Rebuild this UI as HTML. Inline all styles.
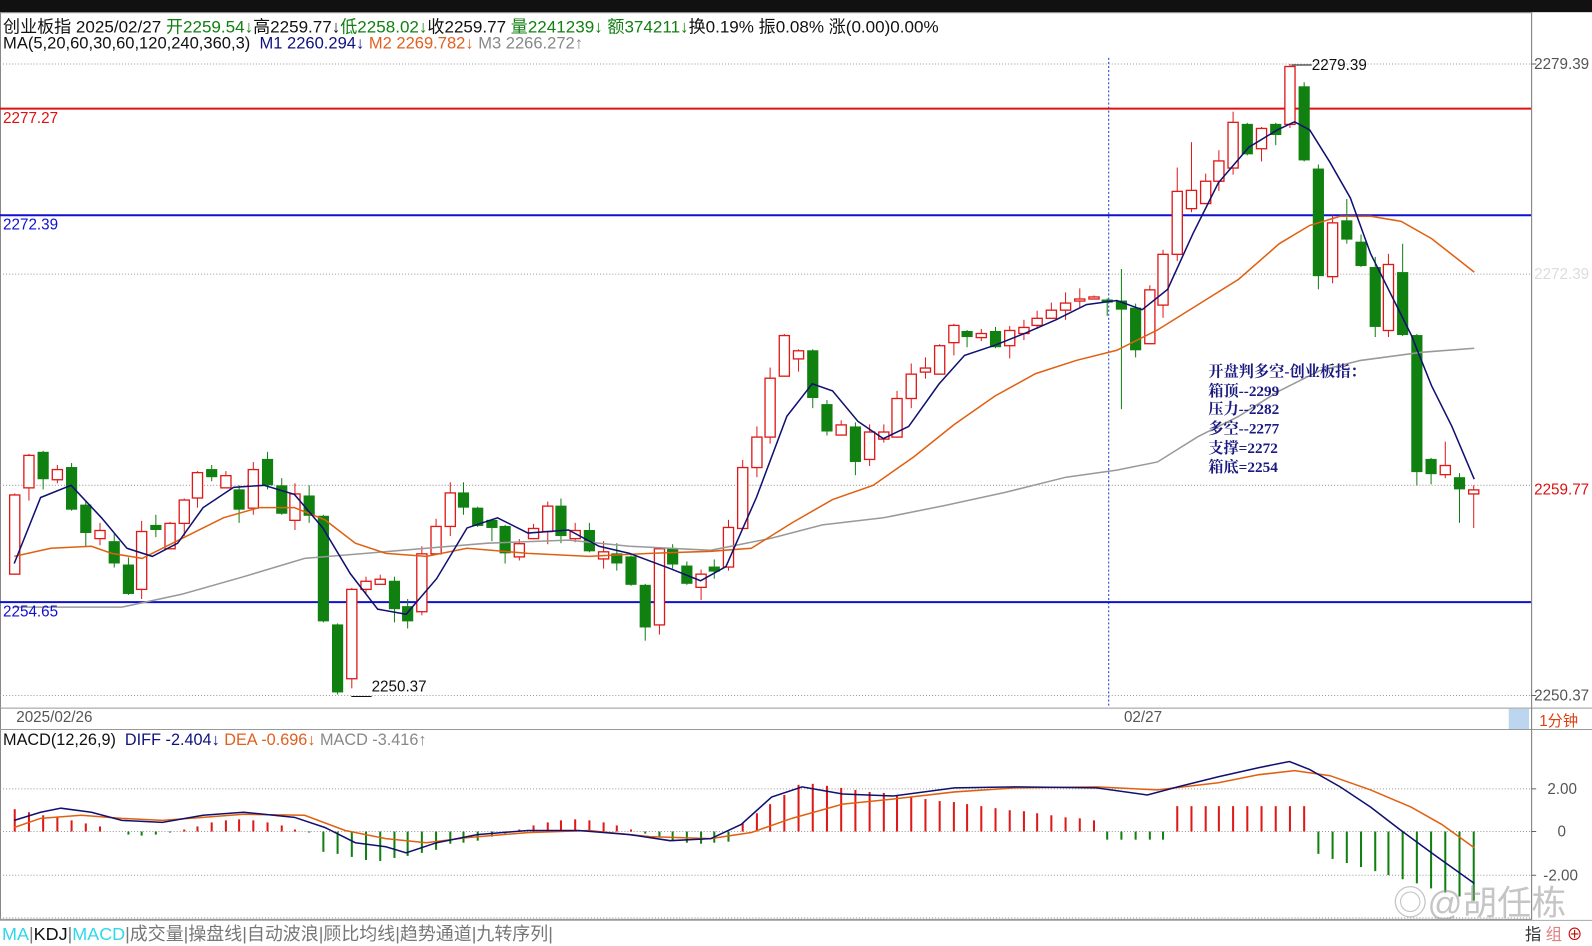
<!DOCTYPE html>
<html><head><meta charset="utf-8">
<style>
html,body{margin:0;padding:0;background:#fff;}
body{width:1592px;height:940px;overflow:hidden;position:relative;font-family:"Liberation Sans","Noto Sans CJK SC",sans-serif;}
#w{position:absolute;left:0;top:0;width:1568px;height:926px;transform:scale(1.01531);transform-origin:0 0;}
.t{position:absolute;white-space:nowrap;font-size:15px;}
</style></head><body><div id="w">
<div style="position:absolute;left:0;top:0;width:1568px;height:12px;background:#111;"></div>
<svg id="s" width="1568" height="926" style="position:absolute;left:0;top:0">
<rect x="0.5" y="12.5" width="1508" height="893" fill="none" stroke="#888"/>
<line x1="0" y1="697.5" x2="1568" y2="697.5" stroke="#999"/>
<line x1="0" y1="718.5" x2="1568" y2="718.5" stroke="#999"/>
<line x1="1508.5" y1="12" x2="1508.5" y2="906" stroke="#888"/>
<rect x="1486" y="698" width="20" height="20" fill="#bcd6f0"/>
<g stroke="#999" stroke-dasharray="1,2">
<line x1="0" y1="63" x2="1508" y2="63"/><line x1="0" y1="270" x2="1508" y2="270"/>
<line x1="0" y1="478" x2="1508" y2="478"/><line x1="0" y1="685" x2="1508" y2="685"/>
<line x1="0" y1="777" x2="1508" y2="777"/><line x1="0" y1="819" x2="1508" y2="819"/>
<line x1="0" y1="862" x2="1508" y2="862"/><line x1="0" y1="904" x2="1508" y2="904"/>
</g>
<line x1="1092" y1="57" x2="1092" y2="697" stroke="#1a3cc8" stroke-dasharray="2,2"/>
<line x1="0" y1="107" x2="1508" y2="107" stroke="#e01010" stroke-width="2"/>
<line x1="0" y1="212" x2="1508" y2="212" stroke="#1010d0" stroke-width="2"/>
<line x1="0" y1="593" x2="1508" y2="593" stroke="#1010d0" stroke-width="2"/>
<g id="c"></g><g id="m"></g>
<polyline fill="none" stroke="#999" stroke-width="1.5" points="14,598 120,598 180,585 240,568 300,550 360,545 420,540 480,535 560,532 620,538 700,542 760,530 810,517 870,510 930,498 990,485 1050,470 1100,463 1140,455 1180,430 1220,410 1260,385 1300,365 1340,355 1400,347 1452,343"/>
<polyline fill="none" stroke="#e06010" stroke-width="1.5" points="14,548 50,540 90,538 110,545 140,550 180,530 220,510 255,500 290,500 320,512 350,535 380,545 420,548 460,540 520,545 580,548 640,545 700,543 740,540 780,515 820,492 860,478 900,450 940,418 980,390 1020,368 1060,355 1100,345 1140,325 1180,300 1220,275 1260,240 1290,222 1320,213 1350,213 1380,218 1410,235 1452,268"/>
<polyline fill="none" stroke="#101070" stroke-width="1.5" points="14,555 40,490 70,478 100,510 125,540 150,548 175,535 200,500 230,480 260,478 290,487 318,520 345,565 372,600 400,605 430,570 460,520 490,510 520,525 560,522 590,538 620,545 660,560 690,572 715,558 745,490 775,410 800,378 820,385 845,415 870,432 895,420 925,378 950,350 980,340 1010,328 1040,315 1070,300 1100,296 1125,305 1150,285 1175,230 1200,180 1230,145 1258,128 1275,120 1290,128 1310,160 1330,195 1350,250 1370,290 1390,330 1410,380 1430,420 1452,472"/>
<polyline fill="none" stroke="#e06010" stroke-width="1.5" points="14,815 40,806 80,803 120,806 160,808 200,805 240,802 300,803 340,818 380,826 420,830 460,825 520,820 580,818 640,824 700,826 740,820 780,806 830,792 880,787 940,780 1000,776 1080,775 1140,778 1200,771 1240,763 1275,759 1310,764 1350,778 1390,795 1420,812 1452,835"/>
<polyline fill="none" stroke="#101070" stroke-width="1.5" points="14,808 40,800 60,796 90,800 120,808 160,810 200,803 240,800 290,805 320,815 350,830 380,834 400,840 430,830 470,822 520,818 570,818 620,822 660,828 700,826 730,812 760,785 790,775 830,782 880,784 940,776 1000,775 1080,776 1130,783 1160,775 1200,765 1240,756 1270,750 1290,758 1320,775 1350,795 1380,818 1410,840 1452,870"/>
<text x="1292" y="69" font-size="15" font-family="Liberation Sans" fill="#111">2279.39</text>
<line x1="1272" y1="64" x2="1292" y2="64" stroke="#111"/>
<text x="366" y="681" font-size="15" font-family="Liberation Sans" fill="#111">2250.37</text>
<line x1="346" y1="686" x2="366" y2="686" stroke="#111"/>
<g font-family="Liberation Sans" font-size="15" fill="#555">
<text x="1511" y="68">2279.39</text><text x="1511" y="275" fill="#ddd">2272.39</text>
<text x="1511" y="690">2250.37</text>
<text x="1524" y="782">2.00</text><text x="1534" y="824">0</text><text x="1520" y="867">-2.00</text>
</g>
<text x="1511" y="487" font-family="Liberation Sans" font-size="15" fill="#e01010">2259.77</text>
<g stroke="#666"><line x1="1508" y1="63" x2="1513" y2="63"/><line x1="1508" y1="685" x2="1513" y2="685"/><line x1="1508" y1="777" x2="1513" y2="777"/><line x1="1508" y1="819" x2="1513" y2="819"/><line x1="1508" y1="862" x2="1513" y2="862"/></g>
</svg>
<div class="t" style="left:3px;top:13px;color:#111;font-size:16.8px">创业板指 2025/02/27 <span style="color:#108010">开2259.54↓</span>高2259.77↓<span style="color:#108010">低2258.02↓</span>收2259.77 <span style="color:#108010">量2241239↓ 额374211↓</span>换0.19% 振0.08% 涨(0.00)0.00%</div>
<div class="t" style="left:3px;top:34px;color:#111;font-size:16.3px">MA(5,20,60,30,60,120,240,360,3) &nbsp;<span style="color:#101080">M1 2260.294↓</span> <span style="color:#e06020">M2 2269.782↓</span> <span style="color:#888">M3 2266.272↑</span></div>
<div class="t" style="left:3px;top:108px;color:#e01010">2277.27</div>
<div class="t" style="left:3px;top:213px;color:#1010d0">2272.39</div>
<div class="t" style="left:3px;top:594px;color:#1010d0">2254.65</div>
<div class="t" style="left:16px;top:698px;color:#555">2025/02/26</div>
<div class="t" style="left:1107px;top:698px;color:#555">02/27</div>
<div class="t" style="left:1516px;top:699px;color:#e04010">1分钟</div>
<div class="t" style="left:3px;top:721px;color:#111;font-size:16px">MACD(12,26,9) &nbsp;<span style="color:#101080">DIFF -2.404↓</span> <span style="color:#e06020">DEA -0.696↓</span> <span style="color:#888">MACD -3.416↑</span></div>
<div class="t" style="left:1190px;top:358px;color:#1a1a80;font-family:'Liberation Serif','Noto Serif CJK SC',serif;font-weight:bold;line-height:18.7px">开盘判多空-创业板指：<br>箱顶--2299<br>压力--2282<br>多空--2277<br>支撑=2272<br>箱底=2254</div>
<div class="t" style="left:1372px;top:862px;color:rgba(150,150,150,0.55);font-size:34px;">◎@胡任栋</div>
<div style="position:absolute;left:0;top:906px;width:1568px;height:1px;background:#aaa"></div>
<div class="t" style="left:2px;top:906px;font-size:17.7px;color:#777"><span style="color:#30d8e8">MA</span>|<span style="color:#111">KDJ</span>|<span style="color:#30d8e8">MACD</span>|成交量|操盘线|自动波浪|顾比均线|趋势通道|九转序列|</div>
<div class="t" style="left:1502px;top:907px;font-size:16px;color:#333">指 <span style="color:#e08080">组</span> <span style="color:#c00">⊕</span></div>
</div>
<script>
var d=[[14,487,565,1],[28,448,480,1],[42,445,472,0],[56,462,472,1],[70,460,502,0],[84,497,525,0],[98,522,530,1],[112,533,555,0],[126,556,585,0],[139,523,580,1],[153,517,522,0],[167,515,540,1],[181,492,515,1],[194,465,490,1],[208,462,470,0],[222,468,480,1],[235,482,502,0],[249,462,500,1],[263,452,478,0],[277,478,506,0],[290,486,512,1],[304,488,508,0],[318,508,612,0],[332,615,682,0],[346,580,668,1],[360,572,580,1],[374,570,575,1],[388,572,600,0],[401,597,612,0],[415,545,602,1],[429,518,545,1],[443,485,518,1],[456,485,500,0],[470,500,518,0],[484,512,520,0],[497,518,545,0],[511,535,548,1],[525,520,530,1],[539,498,523,1],[552,498,528,0],[566,522,530,1],[580,522,543,0],[594,543,550,1],[607,545,555,0],[621,548,576,0],[635,576,618,0],[649,540,615,1],[662,540,556,0],[676,557,575,0],[690,565,578,1],[703,558,563,0],[717,519,558,1],[731,460,520,1],[745,430,460,1],[758,372,430,1],[772,330,370,1],[786,345,353,1],[800,345,392,0],[814,398,425,0],[828,418,428,1],[842,420,455,0],[856,425,452,1],[870,425,432,1],[883,392,430,1],[897,368,392,1],[911,362,366,1],[925,340,368,1],[939,320,337,1],[952,326,332,0],[966,328,332,1],[980,326,342,0],[994,325,340,1],[1008,322,328,1],[1021,313,320,1],[1035,305,313,1],[1049,298,305,1],[1063,294,296,1],[1077,292,294,1],[1090,295,298,0],[1104,296,305,0],[1118,303,345,0],[1132,285,338,1],[1145,250,300,1],[1159,188,250,1],[1173,187,205,1],[1187,178,200,1],[1200,158,178,1],[1214,120,165,1],[1228,122,152,0],[1242,126,146,1],[1256,122,133,0],[1270,65,122,1],[1284,85,158,0],[1298,166,272,0],[1312,219,272,1],[1326,217,236,0],[1340,238,262,0],[1354,263,322,0],[1367,260,325,1],[1381,268,330,0],[1395,330,465,0],[1409,452,467,0],[1423,458,467,1],[1437,470,482,0],[1451,482,486,1]];
var sp={1270:[63],332:[0,684],1104:[265,403],1173:[140],1159:[165],1381:[240],1423:[435],1451:[0,520],1437:[0,515],1326:[196],1118:[0,352]};
var h='';
d.forEach(function(c,i){var col=c[3]?'#e01818':'#108010';var r=(i*37)%11;var hi=c[1]-(r%4)*3-1,lo=c[2]+(r%5)*3+1;
var s=sp[c[0]];if(s){if(s[0])hi=s[0];if(s[1])lo=s[1];}
h+='<line x1="'+(c[0]+.5)+'" y1="'+hi+'" x2="'+(c[0]+.5)+'" y2="'+lo+'" stroke="'+col+'"/>';
if(c[3])h+='<rect x="'+(c[0]-4.5)+'" y="'+c[1]+'.5" width="10" height="'+Math.max(1,c[2]-c[1])+'" fill="#fff" stroke="'+col+'" stroke-width="1.3"/>';
else h+='<rect x="'+(c[0]-5)+'" y="'+c[1]+'" width="11" height="'+Math.max(1,c[2]-c[1])+'" fill="'+col+'"/>';});
document.getElementById('c').innerHTML=h;
var m='';
d.forEach(function(c,i){var x=c[0];var v;
if(x<100)v=22-(x-14)*0.2;else if(x<310)v=8*Math.sin(x/30)+4;else if(x<430)v=-30+Math.abs(x-370)*0.2;else if(x<720)v=12*Math.sin(x/40);else if(x<790)v=(x-720)*0.7;else if(x<1080)v=48-(x-790)*0.13;else if(x<1150)v=-8;else if(x<1290)v=25;else v=-20-(x-1290)*0.3;
v=Math.round(v);var col=v>=0?'#e01818':'#108010';m+='<line x1="'+(x+.5)+'" y1="819" x2="'+(x+.5)+'" y2="'+(819-v)+'" stroke="'+col+'" stroke-width="2"/>';});
document.getElementById('m').innerHTML=m;
</script>
</body></html>
